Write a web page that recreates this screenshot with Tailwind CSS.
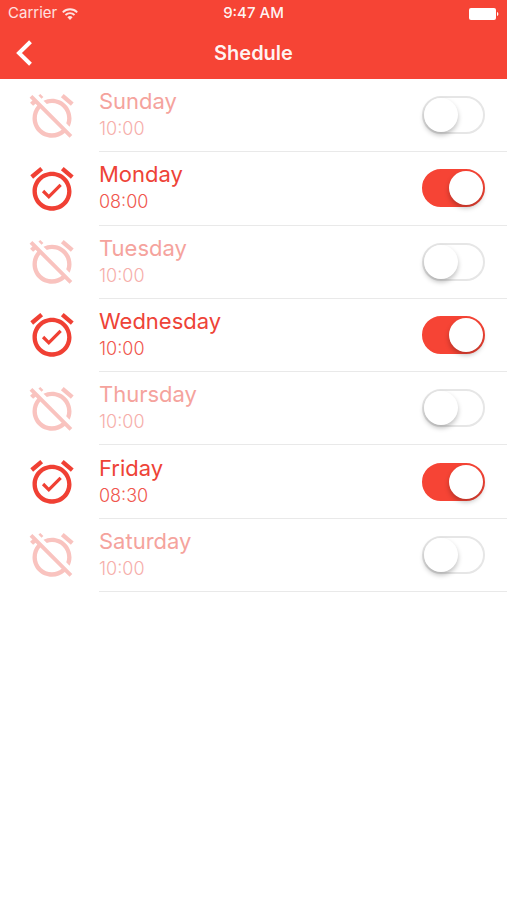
<!DOCTYPE html>
<html lang="en">
<head>
    <meta charset="UTF-8">
    <meta name="viewport" content="width=device-width, initial-scale=1.0">
    <title>Shedule</title>
    <script src="https://cdn.jsdelivr.net/npm/@tailwindcss/browser@4"></script>
</head>
<body class="min-h-screen bg-white font-['Inter',sans-serif]">
    <!-- Icon sprites -->
    <svg class="hidden">
        <symbol id="alarm-on" viewBox="0 0 24 24">
            <path d="M22 5.72l-4.6-3.86-1.29 1.53 4.6 3.86L22 5.72zM7.88 3.39L6.6 1.86 2 5.71l1.29 1.53 4.59-3.85zM12 4c-4.97 0-9 4.03-9 9s4.02 9 9 9c4.97 0 9-4.03 9-9s-4.03-9-9-9zm0 16c-3.87 0-7-3.13-7-7s3.13-7 7-7 7 3.13 7 7-3.13 7-7 7z"/>
            <path d="M10.54 14.53L8.41 12.4l-1.06 1.06 3.18 3.18 6-6-1.06-1.06-4.93 4.95z"/>
        </symbol>
        <symbol id="alarm-off" viewBox="0 0 24 24">
            <path d="M12 6c3.87 0 7 3.13 7 7 0 .84-.16 1.65-.43 2.4l1.52 1.52c.58-1.19.91-2.51.91-3.92 0-4.97-4.03-9-9-9-1.41 0-2.73.33-3.92.91L9.6 6.43C10.35 6.16 11.16 6 12 6zm10-.28l-4.6-3.86-1.29 1.53 4.6 3.86L22 5.72zM2.92 2.29L1.65 3.57 2.98 4.9l-1.11.93 1.42 1.42 1.11-.94.8.8C3.83 8.69 3 10.75 3 13c0 4.97 4.02 9 9 9 2.25 0 4.31-.83 5.89-2.2l2.2 2.2 1.27-1.27L3.89 3.27l-.97-.98zm13.55 16.1C15.26 19.39 13.7 20 12 20c-3.87 0-7-3.13-7-7 0-1.7.61-3.26 1.61-4.47l9.86 9.86zM8.02 3.28L6.6 1.86l-.86.71 1.42 1.42.86-.71z"/>
        </symbol>
    </svg>

    <header class="bg-[#f64435] text-white">
        <!-- Status bar -->
        <div class="grid h-[27px] grid-cols-3 items-center px-2 text-[15px]">
            <div class="flex items-center gap-1 text-white/85">
                <span>Carrier</span>
                <svg class="h-[12px] w-[18px]" viewBox="0 0 18 12" fill="none" stroke="currentColor" stroke-width="1.9">
                    <path d="M1.8 4.3a10.2 10.2 0 0 1 14.4 0"/>
                    <path d="M4.5 7a6.4 6.4 0 0 1 9 0"/>
                    <path d="M9 12L6.4 9.2a3.7 3.7 0 0 1 5.2 0z" fill="currentColor" stroke="none"/>
                </svg>
            </div>
            <span class="text-center font-medium text-white/95">9:47 AM</span>
            <svg class="h-[12px] w-[30px] justify-self-end" viewBox="0 0 30 12" fill="currentColor">
                <rect width="27" height="12" rx="2"/>
                <path d="M28 4c1.800.5 1.800 3.500 0 4z"/>
            </svg>
        </div>
        <!-- Title bar -->
        <div class="grid h-[52px] grid-cols-3 items-center px-4">
            <button type="button" aria-label="Back" class="w-4">
                <svg class="h-[26px] w-[16px]" viewBox="0 0 16 26" fill="none" stroke="currentColor" stroke-width="4">
                    <path d="M14.5 1.7L3 13l11.5 11.3"/>
                </svg>
            </button>
            <h1 class="text-center text-xl font-semibold text-white/95">Shedule</h1>
        </div>
    </header>

    <main>
        <ul id="days" class="grid min-h-[513px] auto-rows-fr"></ul>
    </main>

    <script>
        const days = [
            { name: 'Sunday', time: '10:00', on: false },
            { name: 'Monday', time: '08:00', on: true },
            { name: 'Tuesday', time: '10:00', on: false },
            { name: 'Wednesday', time: '10:00', on: true },
            { name: 'Thursday', time: '10:00', on: false },
            { name: 'Friday', time: '08:30', on: true },
            { name: 'Saturday', time: '10:00', on: false }
        ];

        const list = document.getElementById('days');

        function renderDays() {
            list.innerHTML = days.map((day, i) => `
                <li class="flex items-stretch pl-[26px]">
                    <svg class="mr-[21px] size-[52px] shrink-0 self-center ${day.on ? 'fill-[#f04034]' : 'fill-[#f9c3bf]'}"><use href="#${day.on ? 'alarm-on' : 'alarm-off'}"/></svg>
                    <div class="flex flex-1 items-center justify-between border-b border-[#e9e9e9] pr-[22px]">
                        <label for="day-${i}">
                            <span class="block text-[22px] leading-7 ${day.on ? 'text-[#ee4337]' : 'text-[#f5a39d]'}">${day.name}</span>
                            <span class="block text-lg leading-7 font-light ${day.on ? 'text-[#f0564d]' : 'text-[#f6aeaa]'}">${day.time}</span>
                        </label>
                        <input type="checkbox" id="day-${i}" data-day="${i}" ${day.on ? 'checked' : ''}
                               class="flex h-[38px] w-[63px] shrink-0 cursor-pointer appearance-none items-center rounded-full border-2 border-[#e6e6e6] bg-white before:size-[34px] before:rounded-full before:bg-white before:shadow-[0_3px_5px_rgba(0,0,0,0.25)] checked:justify-end checked:border-[#f64435] checked:bg-[#f64435]">
                    </div>
                </li>
            `).join('');
        }

        list.addEventListener('change', function(e) {
            days[e.target.dataset.day].on = e.target.checked;
            renderDays();
        });

        renderDays();
    </script>
</body>
</html>
